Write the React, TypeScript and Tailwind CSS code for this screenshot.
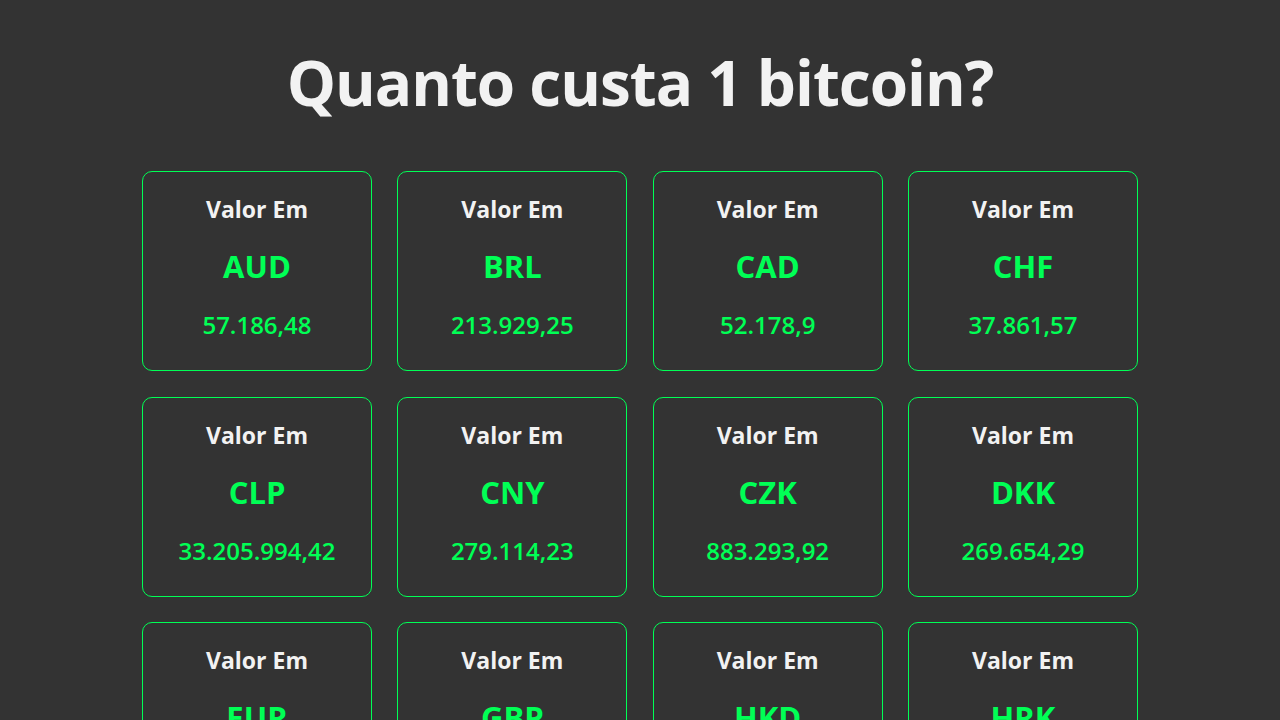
import React from "react";

const data: [string, string][] = [
  ["AUD", "57.186,48"],
  ["BRL", "213.929,25"],
  ["CAD", "52.178,9"],
  ["CHF", "37.861,57"],
  ["CLP", "33.205.994,42"],
  ["CNY", "279.114,23"],
  ["CZK", "883.293,92"],
  ["DKK", "269.654,29"],
  ["EUR", "36.245,11"],
  ["GBP", "31.118,52"],
  ["HKD", "320.410,77"],
  ["HRK", "273.004,18"],
];

export default function App() {
  return (
    <div
      className="min-h-screen bg-[#333333] text-[#f2f2f2]"
      style={{ fontFamily: '"Open Sans", "Noto Sans", sans-serif' }}
    >
      <h1 className="pt-[50px] text-center text-[62px] font-bold leading-[64px] tracking-[-1px]">
        Quanto custa 1 bitcoin?
      </h1>
      <div className="mx-auto mt-[57px] grid w-[996px] grid-cols-[repeat(4,230px)] justify-between gap-y-[25.5px] pb-10">
        {data.map(([code, value]) => (
          <div
            key={code}
            className="flex h-[200px] flex-col items-center rounded-[10px] border border-[#00ff55] pt-[21px]"
          >
            <div className="text-[23px] font-bold leading-[32px] text-[#f2f2f2]">Valor Em</div>
            <div className="mt-[21px] text-[31px] font-bold leading-[40px] text-[#00ff55]">{code}</div>
            <div className="mt-[23px] text-[24px] font-semibold leading-[32px] text-[#00ff55]">{value}</div>
          </div>
        ))}
      </div>
    </div>
  );
}
